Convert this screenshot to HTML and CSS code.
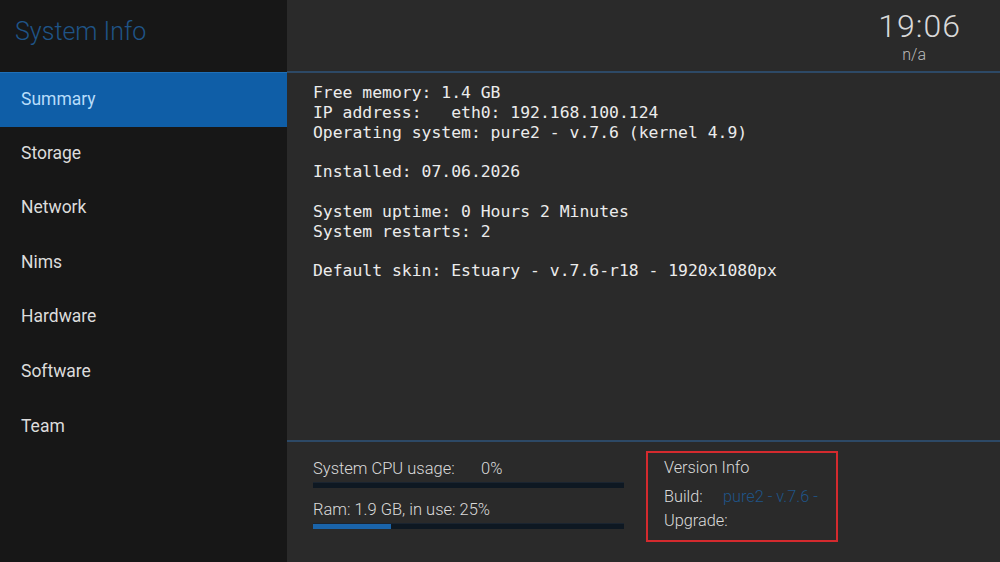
FILE: index.html
```html
<!DOCTYPE html>
<html>
<head>
    <title>System Info</title>
    <link rel="stylesheet" href="styles.css">
</head>
<body>
    <div class="screen">
        <div class="sidebar">
            <div class="sidebar-title">System Info</div>
            <ul class="menu">
                <li class="menu-item active">Summary</li>
                <li class="menu-item">Storage</li>
                <li class="menu-item">Network</li>
                <li class="menu-item">Nims</li>
                <li class="menu-item">Hardware</li>
                <li class="menu-item">Software</li>
                <li class="menu-item">Team</li>
            </ul>
        </div>

        <div class="main">
            <div class="topbar">
                <div class="clock">
                    <div class="time">19:06</div>
                    <div class="date">n/a</div>
                </div>
            </div>

            <pre class="info">Free memory: 1.4 GB
IP address:   eth0: 192.168.100.124
Operating system: pure2 - v.7.6 (kernel 4.9)

Installed: 07.06.2026

System uptime: 0 Hours 2 Minutes
System restarts: 2

Default skin: Estuary - v.7.6-r18 - 1920x1080px</pre>

            <div class="footer">
                <div class="usage">
                    <div class="usage-row">
                        <div class="usage-label"><span class="label-name">System CPU usage:</span>0%</div>
                        <div class="bar"><div class="bar-fill" style="width: 0%"></div></div>
                    </div>
                    <div class="usage-row">
                        <div class="usage-label">Ram: 1.9 GB, in use: 25%</div>
                        <div class="bar"><div class="bar-fill" style="width: 25%"></div></div>
                    </div>
                </div>

                <div class="version">
                    <div class="version-title">Version Info</div>
                    <div class="version-row"><span class="version-key">Build:</span><span class="version-value">pure2 - v.7.6 -</span></div>
                    <div class="version-row"><span class="version-key">Upgrade:</span></div>
                </div>
            </div>
        </div>
    </div>
</body>
</html>
```

FILE: styles.css
```css
body {
    margin: 0;
    padding: 0;
    background-color: #2a2a2a;
    font-family: Roboto, "Liberation Sans", sans-serif;
    color: #e6e6e6;
}

.screen {
    display: flex;
    width: 1000px;
    height: 562px;
    overflow: hidden;
}

/* Left menu */
.sidebar {
    width: 287px;
    flex-shrink: 0;
    background-color: #171717;
}

.sidebar-title {
    height: 72px;
    box-sizing: border-box;
    padding: 17px 0 0 15px;
    font-size: 25px;
    font-weight: 300;
    color: #1f5487;
}

.menu {
    list-style: none;
    margin: 0;
    padding: 0;
}

.menu-item {
    height: 54.6px;
    line-height: 53px;
    padding-left: 21px;
    font-size: 17.5px;
    color: #dcdcdc;
}

.menu-item.active {
    background-color: #0f5ea7;
    color: #b7dcfa;
    border-top: 1px solid #1f70b8;
    box-sizing: border-box;
}

/* Right panel */
.main {
    flex: 1;
    display: flex;
    flex-direction: column;
}

.topbar {
    height: 71px;
    border-bottom: 2px solid #2d4966;
    display: flex;
    justify-content: flex-end;
    padding-right: 39px;
}

.clock {
    text-align: right;
    padding-top: 7px;
}

.clock .time {
    font-size: 32px;
    font-weight: 300;
    letter-spacing: 1px;
    line-height: 38px;
    color: #d8d8d8;
}

.clock .date {
    margin-right: 35px;
    font-size: 16px;
    font-weight: 300;
    line-height: 19px;
    color: #bdbdbd;
}

.info {
    flex: 1;
    margin: 0;
    padding: 10px 0 0 26px;
    font-family: "DejaVu Sans Mono", "Liberation Mono", monospace;
    font-size: 16.4px;
    line-height: 19.8px;
    color: #ececec;
}

/* Bottom area */
.footer {
    height: 122px;
    border-top: 2px solid #2d4966;
    display: flex;
    padding: 9px 0 0 26px;
    box-sizing: border-box;
}

.usage {
    width: 311px;
    padding-top: 9px;
}

.usage-row {
    margin-bottom: 13px;
}

.usage-label {
    font-size: 16.5px;
    font-weight: 300;
    color: #dadada;
    line-height: 18px;
}

.label-name {
    display: inline-block;
    width: 168px;
}

.bar {
    margin-top: 4px;
    height: 5px;
    background-color: #0e1822;
    border-top: 1px solid #1a2430;
}

.bar-fill {
    height: 100%;
    background-color: #1a64aa;
}

.version {
    margin-left: 22px;
    width: 192px;
    height: 91px;
    box-sizing: border-box;
    border: 2px solid #d42a2e;
    padding: 5px 0 0 16px;
    font-size: 16.3px;
    font-weight: 300;
    color: #dadada;
}

.version-title {
    line-height: 20px;
    margin-bottom: 7px;
}

.version-row {
    line-height: 24px;
}

.version-key {
    display: inline-block;
    width: 59px;
}

.version-value {
    color: #1f5487;
}
```
